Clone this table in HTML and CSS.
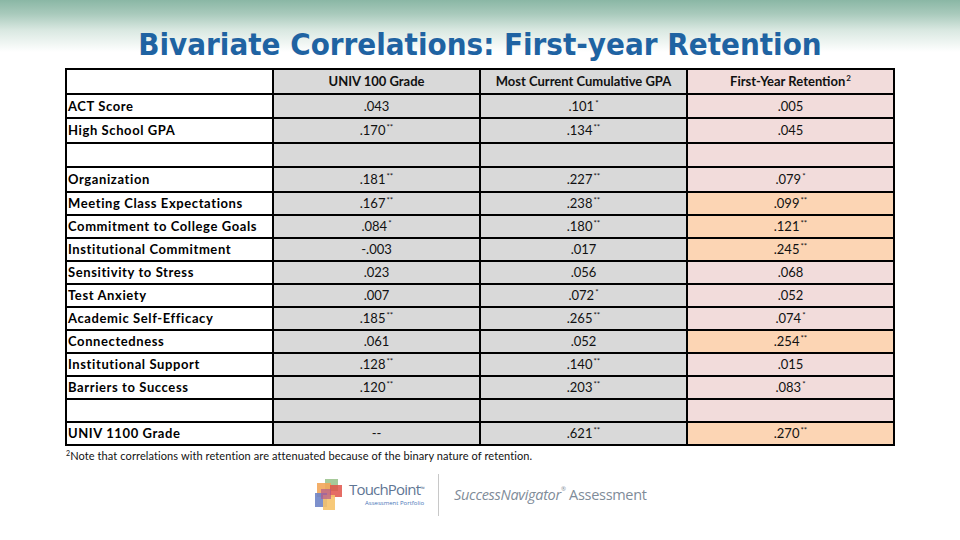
FILE: index.html
```html
<!DOCTYPE html>
<html>
<head>
<meta charset="utf-8">
<link rel="stylesheet" href="styles.css">
</head>
<body>
<div class="slide">
  <h1 class="title">Bivariate Correlations: First-year Retention</h1>
  <table class="corr">
    <tr class="tall">
      <td class="lab"></td>
      <td class="g head">UNIV 100 Grade</td>
      <td class="g head">Most Current Cumulative GPA</td>
      <td class="p head">First-Year Retention<sup>2</sup></td>
    </tr>
    <tr class="tall">
      <td class="lab">ACT Score</td>
      <td class="g">.043</td>
      <td class="g">.101<sup>*</sup></td>
      <td class="p">.005</td>
    </tr>
    <tr class="tall">
      <td class="lab">High School GPA</td>
      <td class="g">.170<sup>**</sup></td>
      <td class="g">.134<sup>**</sup></td>
      <td class="p">.045</td>
    </tr>
    <tr class="tall">
      <td class="lab"></td>
      <td class="g"></td>
      <td class="g"></td>
      <td class="p"></td>
    </tr>
    <tr class="tall">
      <td class="lab">Organization</td>
      <td class="g">.181<sup>**</sup></td>
      <td class="g">.227<sup>**</sup></td>
      <td class="p">.079<sup>*</sup></td>
    </tr>
    <tr>
      <td class="lab">Meeting Class Expectations</td>
      <td class="g">.167<sup>**</sup></td>
      <td class="g">.238<sup>**</sup></td>
      <td class="o">.099<sup>**</sup></td>
    </tr>
    <tr>
      <td class="lab">Commitment to College Goals</td>
      <td class="g">.084<sup>*</sup></td>
      <td class="g">.180<sup>**</sup></td>
      <td class="o">.121<sup>**</sup></td>
    </tr>
    <tr>
      <td class="lab">Institutional Commitment</td>
      <td class="g">-.003</td>
      <td class="g">.017</td>
      <td class="o">.245<sup>**</sup></td>
    </tr>
    <tr>
      <td class="lab">Sensitivity to Stress</td>
      <td class="g">.023</td>
      <td class="g">.056</td>
      <td class="p">.068</td>
    </tr>
    <tr>
      <td class="lab">Test Anxiety</td>
      <td class="g">.007</td>
      <td class="g">.072<sup>*</sup></td>
      <td class="p">.052</td>
    </tr>
    <tr>
      <td class="lab">Academic Self-Efficacy</td>
      <td class="g">.185<sup>**</sup></td>
      <td class="g">.265<sup>**</sup></td>
      <td class="p">.074<sup>*</sup></td>
    </tr>
    <tr>
      <td class="lab">Connectedness</td>
      <td class="g">.061</td>
      <td class="g">.052</td>
      <td class="o">.254<sup>**</sup></td>
    </tr>
    <tr>
      <td class="lab">Institutional Support</td>
      <td class="g">.128<sup>**</sup></td>
      <td class="g">.140<sup>**</sup></td>
      <td class="p">.015</td>
    </tr>
    <tr>
      <td class="lab">Barriers to Success</td>
      <td class="g">.120<sup>**</sup></td>
      <td class="g">.203<sup>**</sup></td>
      <td class="p">.083<sup>*</sup></td>
    </tr>
    <tr>
      <td class="lab"></td>
      <td class="g"></td>
      <td class="g"></td>
      <td class="p"></td>
    </tr>
    <tr>
      <td class="lab">UNIV 1100 Grade</td>
      <td class="g">--</td>
      <td class="g">.621<sup>**</sup></td>
      <td class="o">.270<sup>**</sup></td>
    </tr>
  </table>
  <p class="note"><sup>2</sup>Note that correlations with retention are attenuated because of the binary nature of retention.</p>
  <div class="logos">
    <div class="tp">
      <svg class="tp-mark" width="32" height="32" viewBox="0 0 32 32">
        <rect x="10" y="0" width="13" height="12" fill="#9cc48f" opacity="0.9"/>
        <rect x="2" y="4" width="14" height="14" fill="#f2a65a" opacity="0.9"/>
        <rect x="15" y="6" width="12" height="12" fill="#e0534a" opacity="0.85"/>
        <rect x="0" y="14" width="12" height="14" fill="#6f84c6" opacity="0.9"/>
        <rect x="8" y="16" width="12" height="15" fill="#f6c36a" opacity="0.9"/>
        <rect x="6" y="10" width="10" height="10" fill="#b45b8c" opacity="0.7"/>
      </svg>
      <div class="tp-text">
        <span class="tp-name">TouchPoint<sup>™</sup></span>
        <span class="tp-sub">Assessment Portfolio</span>
      </div>
    </div>
    <div class="sep"></div>
    <div class="sn"><i>SuccessNavigator</i><sup>®</sup> Assessment</div>
  </div>
</div>
</body>
</html>
```

FILE: styles.css
```css
html, body {
  margin: 0;
  padding: 0;
  background: #ffffff;
}
.slide {
  width: 960px;
  height: 540px;
  overflow: hidden;
  background: linear-gradient(to bottom, #8ab7a5 0px, #a9cabc 14px, #d9e8e1 30px, #ffffff 52px, #ffffff 100%);
  font-family: "Lato", "Liberation Sans", sans-serif;
  display: flex;
  flex-direction: column;
}
.title {
  margin: 24px 0 0 0;
  height: 40px;
  line-height: 40px;
  text-align: center;
  font-family: "DejaVu Sans", sans-serif;
  font-stretch: condensed;
  font-weight: bold;
  font-size: 31px;
  color: #1f63a2;
}
.corr {
  margin: 4px 0 0 65px;
  border-collapse: collapse;
  width: 830px;
  table-layout: fixed;
  font-size: 13px;
  color: #111;
}
.corr td {
  border: 2px solid #000;
  height: 21px;
  padding: 0;
  text-align: center;
  vertical-align: middle;
  white-space: nowrap;
}
.corr tr.tall td {
  height: 22.5px;
}
.corr td.lab {
  text-align: left;
  padding-left: 1px;
  font-weight: bold;
  letter-spacing: 0.6px;
  background: #fff;
  color: #000;
}
.corr td.head {
  font-weight: bold;
}
.corr td.g { background: #d9d9d9; }
.corr td.p { background: #f2dcdb; }
.corr td.o { background: #fcd5b4; }
.corr sup {
  font-size: 8px;
  vertical-align: top;
  line-height: 1;
  position: relative;
  top: 1px;
  margin-left: 1px;
}
.note {
  margin: 3px 0 0 66px;
  font-size: 11px;
  color: #111;
  letter-spacing: 0.1px;
}
.note sup {
  font-size: 7px;
  vertical-align: top;
}
.logos {
  margin: 11px 0 0 315px;
  display: flex;
  align-items: center;
  height: 44px;
}
.tp {
  display: flex;
  align-items: center;
  gap: 2px;
}
.tp-mark {
  width: 32px;
  height: 32px;
}
.tp-text {
  display: flex;
  flex-direction: column;
  align-items: flex-end;
}
.tp-name {
  font-family: "Open Sans", sans-serif;
  font-size: 15px;
  color: #5f7694;
  letter-spacing: -0.8px;
  line-height: 17px;
}
.tp-name sup {
  font-size: 6px;
  vertical-align: top;
}
.tp-sub {
  font-family: "Open Sans", sans-serif;
  font-size: 6px;
  color: #4a76b8;
  line-height: 9px;
  margin-top: 1px;
}
.sep {
  width: 1px;
  height: 42px;
  background: #c8c8c8;
  margin: 0 15px 0 14px;
}
.sn {
  font-family: "Open Sans", sans-serif;
  font-size: 14.5px;
  color: #7f8c99;
  letter-spacing: -0.3px;
}
.sn sup {
  font-size: 6px;
  vertical-align: top;
}
```
